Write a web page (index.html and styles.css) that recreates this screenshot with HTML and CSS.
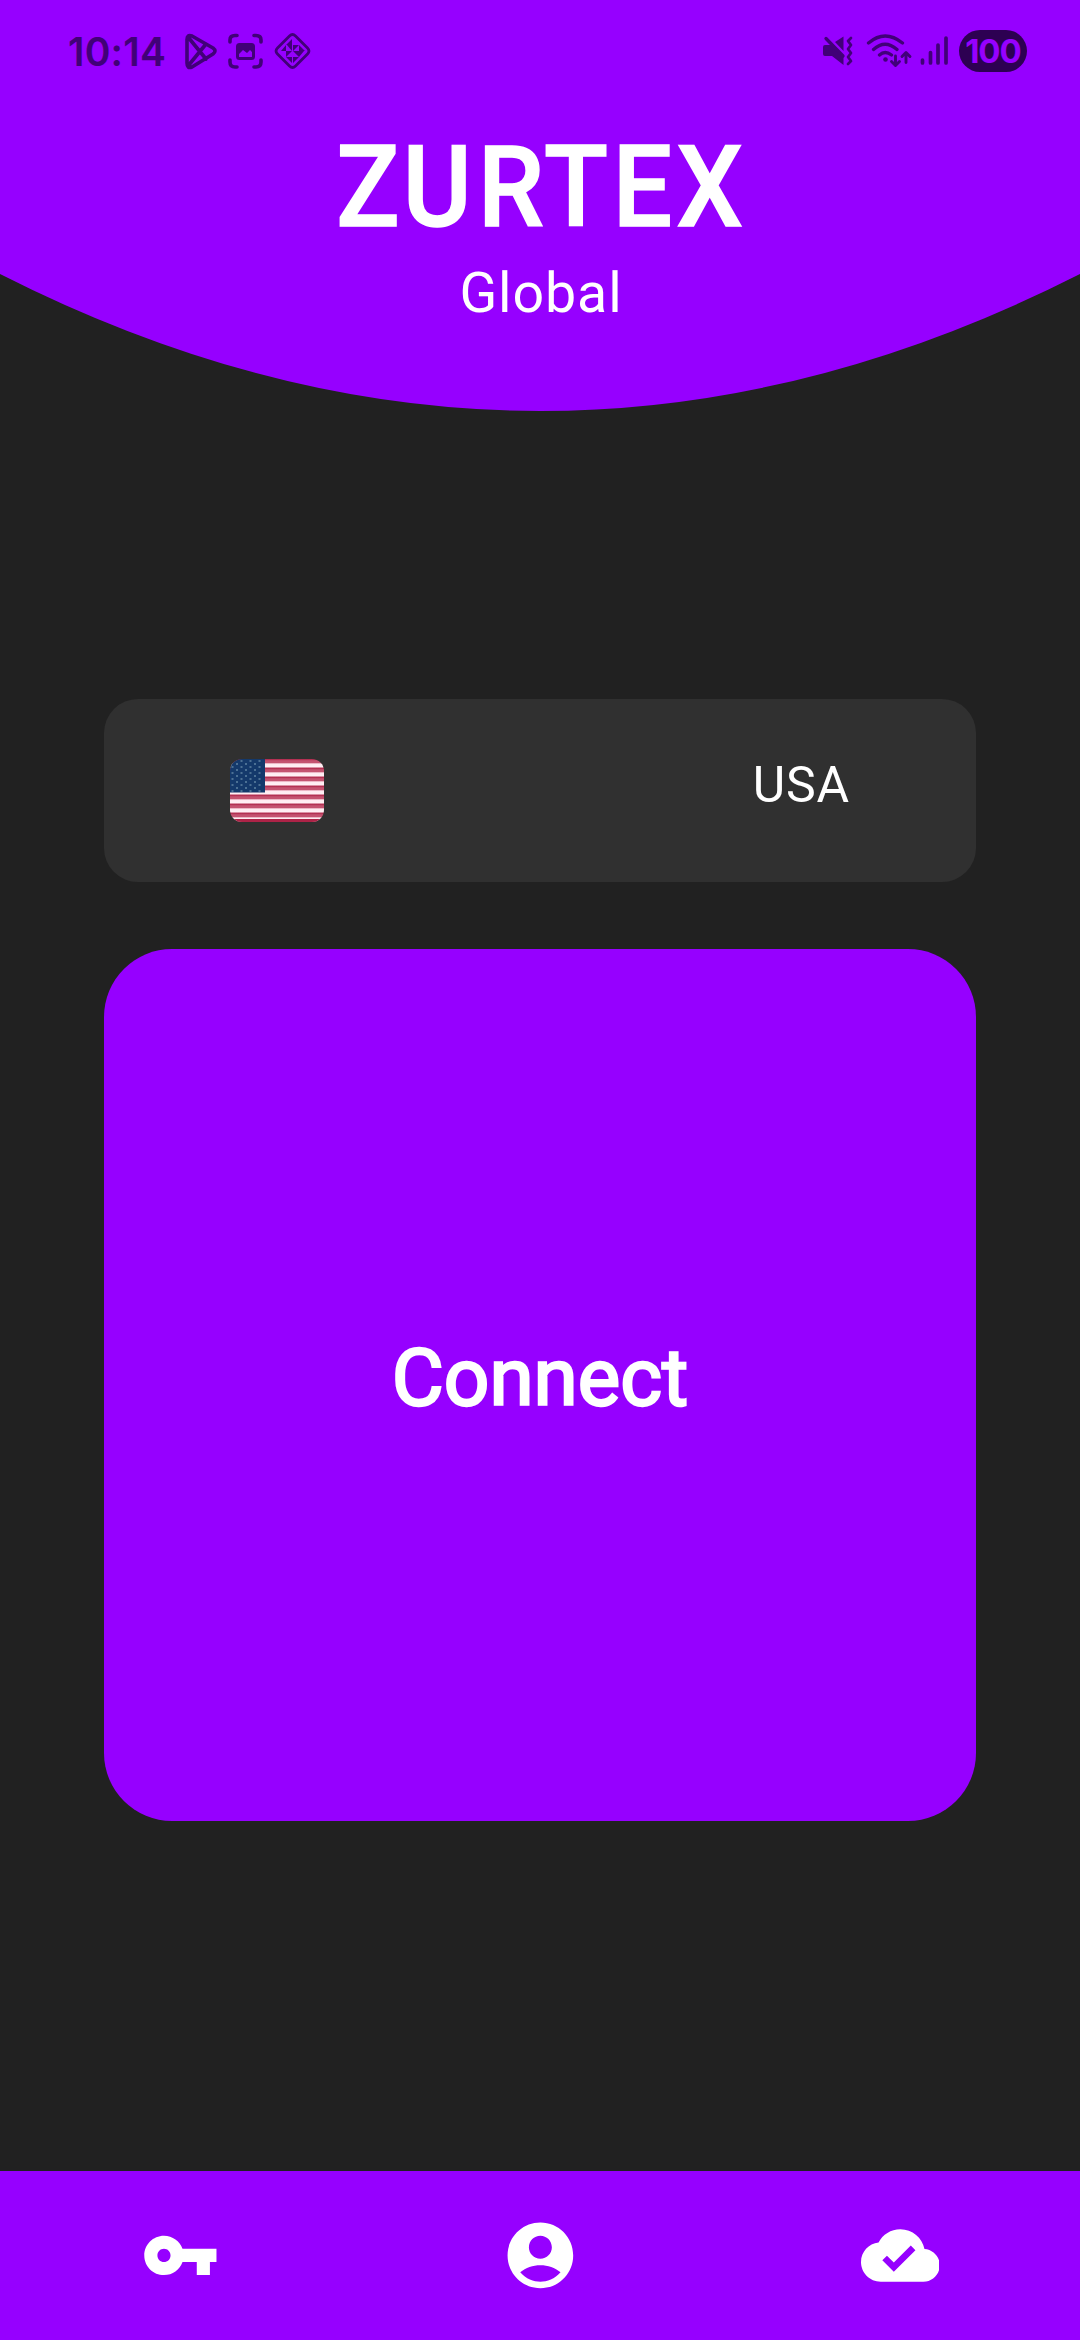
FILE: index.html
```html
<!DOCTYPE html>
<html lang="en">
<head>
<meta charset="utf-8">
<title>Zurtex Global</title>
<link rel="stylesheet" href="styles.css">
</head>
<body>
<div class="app">
  <header class="header">
    <svg class="header-curve" viewBox="0 0 1080 411" aria-hidden="true"><path d="M0 0H1080V274Q540 548 0 274Z"/></svg>
    <div class="status">
      <span class="clock">10:14</span>
      <svg class="status-left" viewBox="180 30 140 44" fill="none" stroke="currentColor" stroke-width="3.6" stroke-linecap="round" stroke-linejoin="round">
        <path d="M187 39.5Q187 34 192 36L213 48Q217 51 213 54L192 67Q187 69 187 63ZM188 37L206 59M188 66L206 44"/>
        <path d="M230 42V40Q230 35.500 235 35.500H237M254 35.500H256Q261 35.500 261 40V42M261 60V62Q261 67 256 67H254M237 67H235Q230 67 230 62V60"/>
        <rect x="237.500" y="44.500" width="16" height="14" rx="2" stroke-width="3"/>
        <path d="M238 45H253V53L250 50L247 53L243 50L238 55Z" fill="currentColor" stroke="none"/>
        <path d="M289.500 36Q292.500 33 295.500 36L307.500 48Q310.500 51 307.500 54L295.500 66Q292.500 69 289.500 66L277.500 54Q274.500 51 277.500 48Z" stroke-width="2.800"/>
        <path d="M292 39V45H286ZM286 45V51H281ZM287 45H292V51ZM293 45H299L293 51ZM299 45V51H305ZM286 51H292L286 57ZM293 51H299V57ZM299 51H304L299 57ZM292 57V63L286 57ZM293 57H299L293 63Z" fill="currentColor" stroke="none"/>
      </svg>
      <span class="status-gap"></span>
      <svg class="status-right" viewBox="820 30 132 40" fill="none" stroke="currentColor" stroke-width="3.3" stroke-linecap="round" stroke-linejoin="round">
        <path d="M823 47Q823 45 825 45H831L843.500 57V65L832 56H825Q823 56 823 54ZM835 42L843.500 36.500V51Z" fill="currentColor" stroke="none"/>
        <path d="M826 38.500L843 56"/>
        <path d="M851 38L848 41L851 45L848 49L851 53L848 57L851 61L848 64" stroke-width="2.700"/>
        <path d="M868.500 43Q885 29 902.500 43M873.500 49.500Q885 39 897 49.500M879.500 55Q885 50 891.500 55"/>
        <circle cx="885.500" cy="59.500" r="2.300" fill="currentColor" stroke="none"/>
        <path d="M895.500 56V65M891.500 61.500L895.500 65.500L899.500 61.500M906 62.500V53M902 56.500L906 52.500L910 56.500" stroke-width="2.900"/>
        <path d="M922.500 60V63M930.500 52.500V63M938 45V63M946 38V63" stroke-width="3.700"/>
      </svg>
      <span class="battery">100</span>
    </div>
    <svg class="brand" viewBox="0 0 1080 140"><text transform="scale(.93 1)" y="111" x="361.500 433 514 585 659 727.500">ZURTEX</text></svg>
    <div class="subtitle">Global</div>
  </header>
  <main class="main">
    <div class="server">
      <svg class="flag" viewBox="0 0 94 63">
        <defs>
          <clipPath id="flag-shape"><rect width="94" height="63" rx="12"/></clipPath>
          <linearGradient id="stripe" x1="0" y1="0" x2="0" y2="1">
            <stop offset="0" stop-color="#ad2347"/><stop offset=".2" stop-color="#c45370"/><stop offset=".42" stop-color="#c45370"/><stop offset=".54" stop-color="#ffeaf0"/><stop offset=".86" stop-color="#fff0f4"/><stop offset="1" stop-color="#c45370"/>
          </linearGradient>
          <pattern id="stripes" width="94" height="9" patternUnits="userSpaceOnUse"><rect width="94" height="9" fill="url(#stripe)"/></pattern>
          <pattern id="stars" width="9" height="6" patternUnits="userSpaceOnUse"><path d="M1.500 1h2v2h-2zM6 4h2v2h-2z" fill="#4b7094"/></pattern>
        </defs>
        <g clip-path="url(#flag-shape)">
          <path fill="url(#stripes)" d="M0 0H94V63H0Z"/>
          <path fill="#ad2347" d="M0 60H94V63H0Z"/>
          <path fill="#14396b" d="M0 0H35V33.500H0Z"/>
          <path fill="url(#stars)" d="M0 1H33V33H0Z"/>
        </g>
      </svg>
      <span class="country">USA</span>
    </div>
    <button class="connect">Connect</button>
  </main>
  <nav class="nav">
    <svg class="nav-icon" viewBox="0 0 24 24"><path d="M12.650 10C11.830 7.670 9.610 6 7 6c-3.310 0-6 2.690-6 6s2.690 6 6 6c2.610 0 4.830-1.670 5.650-4H17v4h4v-4h2v-4H12.650zM7 14c-1.100 0-2-.9-2-2s.9-2 2-2 2 .9 2 2-.9 2-2 2z"/></svg>
    <svg class="nav-icon" viewBox="0 0 24 24"><path d="M12 2C6.480 2 2 6.480 2 12s4.480 10 10 10 10-4.480 10-10S17.520 2 12 2zm0 4c1.930 0 3.500 1.570 3.500 3.500S13.930 13 12 13s-3.500-1.570-3.500-3.500S10.070 6 12 6zm0 14c-2.030 0-4.430-.82-6.140-2.880C7.550 15.800 9.680 15 12 15s4.450.8 6.140 2.120C16.430 19.180 14.030 20 12 20z"/></svg>
    <svg class="nav-icon" viewBox="0 0 24 24"><path d="M19.350 10.040C18.670 6.590 15.640 4 12 4 9.110 4 6.600 5.640 5.350 8.040 2.340 8.360 0 10.910 0 14c0 3.310 2.690 6 6 6h13c2.760 0 5-2.240 5-5 0-2.640-2.050-4.780-4.650-4.960zM10 17l-3.500-3.500 1.410-1.410L10 14.170 15.180 9l1.410 1.410L10 17z"/></svg>
  </nav>
</div>
</body>
</html>
```
FILE: styles.css
```css
* { box-sizing: border-box; }
body { margin: 0; background: #212121; font-family: Roboto, sans-serif; color: #fff; }
.app { width: 1080px; height: 2340px; display: flex; flex-direction: column; }
svg { display: block; flex: none; }

.header { position: relative; height: 411px; flex: none; }
.header-curve { position: absolute; inset: 0; width: 1080px; height: 411px; z-index: -1; fill: #9600ff; }
.status { height: 115px; padding: 30px 53px 0 68px; display: flex; align-items: flex-start; color: #410078; }
.clock { width: 112px; font: 600 39px/43px Inter, sans-serif; letter-spacing: .2px; white-space: nowrap; }
.status-left { width: 140px; height: 44px; }
.status-gap { flex: 1; }
.status-right { width: 132px; height: 40px; margin-right: 7px; }
.battery { width: 68px; height: 42px; border-radius: 21px; background: #2d0052; color: #9600ff; font: 700 33px/43px Inter, sans-serif; letter-spacing: -1px; text-align: center; }
.brand { width: 1080px; height: 140px; fill: #fff; stroke: #fff; stroke-width: 1.5; font-size: 113px; font-weight: 500; }
.subtitle { height: 76px; font-size: 55.5px; line-height: 77px; text-align: center; letter-spacing: .9px; text-indent: 2px; }

.main { flex: 1; padding: 288px 104px 0; display: flex; flex-direction: column; gap: 67px; }
.server { height: 183px; flex: none; border-radius: 34px; background: #303030; padding: 0 126px; display: flex; align-items: center; justify-content: space-between; }
.flag { width: 94px; height: 63px; }
.country { font-size: 50px; line-height: 60px; padding-bottom: 12px; letter-spacing: .8px; }
.connect { height: 872px; flex: none; border: 0; border-radius: 68px; padding: 0 0 14px; background: #9600ff; color: #fff; font: 400 80px/96px Roboto, sans-serif; -webkit-text-stroke: 2.4px #fff; }

.nav { height: 169px; flex: none; background: #9600ff; display: flex; align-items: center; justify-content: space-around; }
.nav-icon { width: 78.75px; height: 78.75px; fill: #fff; }
```
